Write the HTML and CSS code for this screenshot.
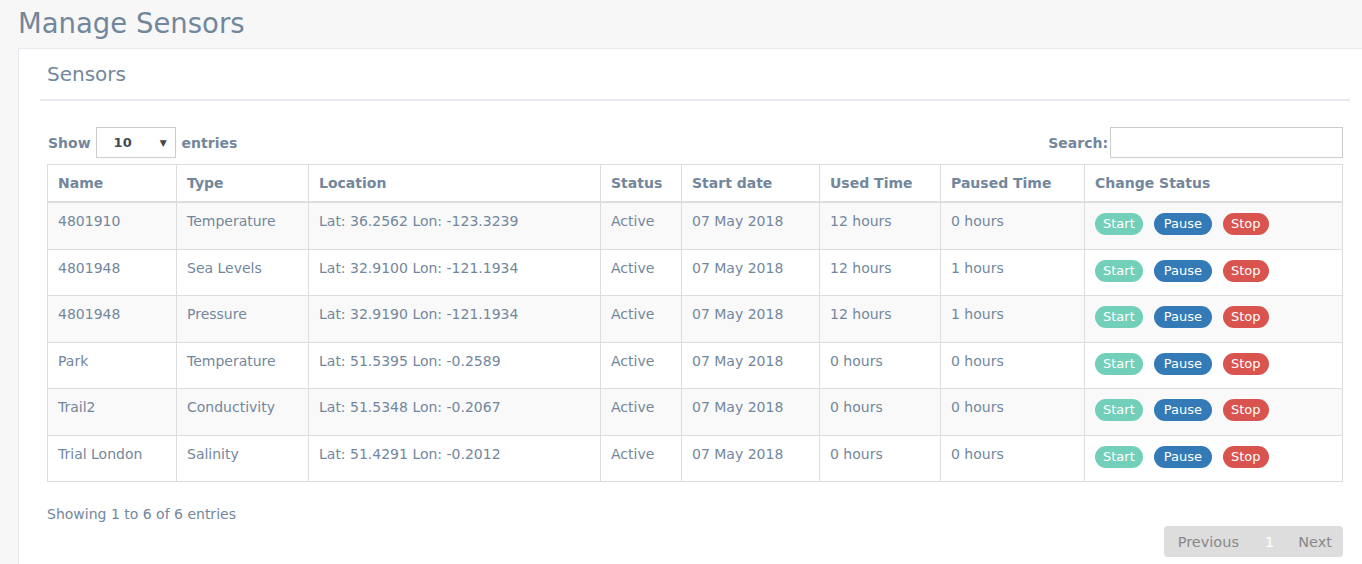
FILE: index.html
```html
<!DOCTYPE html>
<html>
<head>
<meta charset="utf-8">
<link rel="stylesheet" href="styles.css">
</head>
<body>
<h1 class="page-title">Manage Sensors</h1>
<div class="panel">
  <div class="x-title"><h2>Sensors</h2></div>
  <div class="x-content">
    <div class="controls">
      <label class="length">Show
        <span class="select"><span class="select-val">10</span><span class="caret">▼</span></span>
        entries</label>
      <label class="search">Search:<span class="search-input"></span></label>
    </div>
    <table class="grid">
      <colgroup>
        <col style="width:129px"><col style="width:132px"><col style="width:292px"><col style="width:81px">
        <col style="width:138px"><col style="width:121px"><col style="width:144px"><col>
      </colgroup>
      <thead>
        <tr><th>Name</th><th>Type</th><th>Location</th><th>Status</th><th>Start date</th><th>Used Time</th><th>Paused Time</th><th>Change Status</th></tr>
      </thead>
      <tbody>
        <tr><td>4801910</td><td>Temperature</td><td>Lat: 36.2562 Lon: -123.3239</td><td>Active</td><td>07 May 2018</td><td>12 hours</td><td>0 hours</td><td><span class="btn start">Start</span><span class="btn pause">Pause</span><span class="btn stop">Stop</span></td></tr>
        <tr><td>4801948</td><td>Sea Levels</td><td>Lat: 32.9100 Lon: -121.1934</td><td>Active</td><td>07 May 2018</td><td>12 hours</td><td>1 hours</td><td><span class="btn start">Start</span><span class="btn pause">Pause</span><span class="btn stop">Stop</span></td></tr>
        <tr><td>4801948</td><td>Pressure</td><td>Lat: 32.9190 Lon: -121.1934</td><td>Active</td><td>07 May 2018</td><td>12 hours</td><td>1 hours</td><td><span class="btn start">Start</span><span class="btn pause">Pause</span><span class="btn stop">Stop</span></td></tr>
        <tr><td>Park</td><td>Temperature</td><td>Lat: 51.5395 Lon: -0.2589</td><td>Active</td><td>07 May 2018</td><td>0 hours</td><td>0 hours</td><td><span class="btn start">Start</span><span class="btn pause">Pause</span><span class="btn stop">Stop</span></td></tr>
        <tr><td>Trail2</td><td>Conductivity</td><td>Lat: 51.5348 Lon: -0.2067</td><td>Active</td><td>07 May 2018</td><td>0 hours</td><td>0 hours</td><td><span class="btn start">Start</span><span class="btn pause">Pause</span><span class="btn stop">Stop</span></td></tr>
        <tr><td>Trial London</td><td>Salinity</td><td>Lat: 51.4291 Lon: -0.2012</td><td>Active</td><td>07 May 2018</td><td>0 hours</td><td>0 hours</td><td><span class="btn start">Start</span><span class="btn pause">Pause</span><span class="btn stop">Stop</span></td></tr>
      </tbody>
    </table>
    <div class="footer">
      <div class="info">Showing 1 to 6 of 6 entries</div>
      <div class="paginate"><span class="pg prev">Previous</span><span class="pg cur">1</span><span class="pg next">Next</span></div>
    </div>
  </div>
</div>
</body>
</html>
```
FILE: styles.css
```css
html, body {
  margin: 0;
  padding: 0;
}
body {
  background: #f7f7f7;
  font-family: "DejaVu Sans", "Liberation Sans", sans-serif;
  color: #73879c;
  font-size: 14px;
  height: 100vh;
  overflow: hidden;
}
.page-title {
  margin: 0;
  padding-left: 18px;
  height: 48px;
  line-height: 47px;
  font-size: 27.5px;
  font-weight: normal;
}
.panel {
  box-sizing: border-box;
  margin-left: 18px;
  background: #fff;
  border-top: 1px solid #e6e9ed;
  border-left: 1px solid #e6e9ed;
  padding: 0 12px 0 21px;
  height: calc(100vh - 48px);
}
.x-title {
  border-bottom: 2px solid #e6e9ed;
  height: 50px;
  padding-left: 7px;
}
.x-title h2 {
  margin: 0;
  font-size: 20px;
  font-weight: normal;
  line-height: 50px;
}
.x-content {
  padding: 0 7px;
}
.controls {
  display: flex;
  justify-content: space-between;
  align-items: center;
  margin-top: 26px;
  height: 31px;
  margin-bottom: 6px;
}
.controls label {
  font-weight: bold;
  display: flex;
  align-items: center;
  line-height: 28px;
}
.length {
  padding-left: 1px;
}
.select {
  display: inline-flex;
  align-items: center;
  justify-content: space-between;
  box-sizing: border-box;
  width: 80px;
  height: 31px;
  border: 1px solid #ccc;
  margin: 0 6px 0 5px;
  padding: 0 8px 0 17px;
  color: #333;
  font-size: 13px;
}
.select-val {
  font-weight: bold;
  color: #3f4a57;
}
.caret {
  font-size: 9px;
  color: #444;
  font-weight: normal;
}
.search-input {
  display: inline-block;
  box-sizing: border-box;
  width: 233px;
  height: 31px;
  border: 1px solid #ccc;
  margin-left: 2px;
}
.grid {
  width: 100%;
  border-collapse: collapse;
  table-layout: fixed;
  border: 1px solid #ddd;
}
.grid th, .grid td {
  border: 1px solid #ddd;
  text-align: left;
  vertical-align: top;
  padding: 8px 10px;
  line-height: 20px;
  white-space: nowrap;
}
.grid th {
  font-weight: bold;
  border-bottom: 2px solid #ddd;
  height: 19px;
}
.grid td {
  height: 29.5px;
}
.grid tbody tr:nth-child(odd) {
  background: #f9f9f9;
}
.btn {
  display: inline-block;
  height: 22px;
  line-height: 22px;
  margin-top: 2px;
  padding: 0 8px;
  border-radius: 11px;
  color: #fff;
  font-size: 13px;
  margin-right: 11px;
}
.btn.start { background: #72cfba; }
.btn.pause { background: #337ab7; padding: 0 10px; }
.btn.stop { background: #d9534f; }
.footer {
  display: flex;
  justify-content: space-between;
  align-items: flex-start;
}
.info {
  padding-top: 22px;
  line-height: 20px;
}
.paginate {
  margin-top: 44px;
  display: flex;
  align-items: center;
  height: 31px;
  background: #dddddd;
  border-radius: 4px;
  padding: 0 11px 0 14px;
  color: #888;
  font-size: 14.5px;
}
.pg.cur {
  color: #fff;
  margin: 0 24px 0 26px;
}
```
